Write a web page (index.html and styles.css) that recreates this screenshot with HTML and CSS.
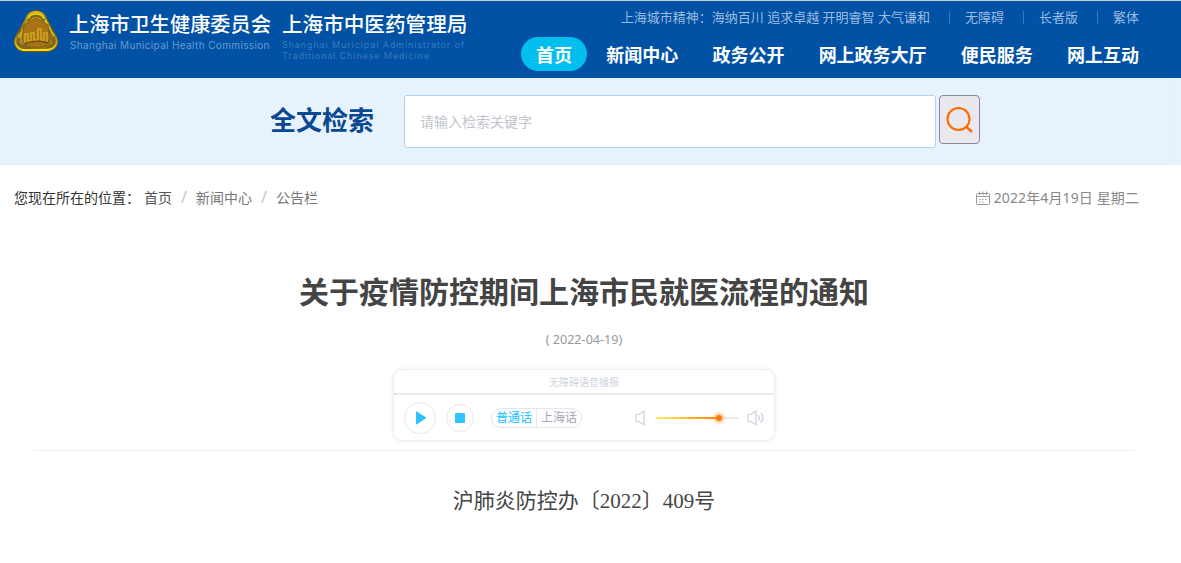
FILE: index.html
```
<!DOCTYPE html>
<html lang="zh-CN">
<head>
<meta charset="utf-8">
<title>关于疫情防控期间上海市民就医流程的通知</title>
<link rel="stylesheet" href="styles.css">
</head>
<body>
<header class="header">
  <div class="brand">
    <svg class="emblem" viewBox="0 0 46 44" width="46" height="44">
      <defs>
        <linearGradient id="gold" x1="0" y1="0" x2="1" y2="1">
          <stop offset="0" stop-color="#a37c18"/><stop offset=".35" stop-color="#c9ab17"/>
          <stop offset=".6" stop-color="#80621a"/><stop offset="1" stop-color="#b3920f"/>
        </linearGradient>
        <linearGradient id="rim" x1="0" y1="0" x2="0" y2="1">
          <stop offset="0" stop-color="#e0c010"/><stop offset=".5" stop-color="#7c5a1c"/><stop offset="1" stop-color="#f0e010"/>
        </linearGradient>
      </defs>
      <path d="M13 8C16-1 30-1 33 8L43 26C49 36 42 43 33 43H12C3 43-2 35 3 26Z" fill="#75521d"/>
      <path d="M14 9C17 1 29 1 32 9L42 27C46 35 41 41 33 41H12C4 41 0 34 4 27Z" fill="url(#gold)" stroke="url(#rim)" stroke-width="2"/>
      <path d="M15 12C18 5 28 5 31 12M6 29C3 35 7 38 14 38M40 29C43 35 39 38 33 38" fill="none" stroke="#80651b" stroke-width="3"/>
      <path d="M15 10C18 3.500 28 3.500 31 10M32 11L41 27" fill="none" stroke="#e6d912" stroke-width="1.300"/>
      <path d="M23 9L35 16L37 30L31 38L15 38L9 30L11 16Z" fill="#a87416" stroke="#81601a" stroke-width="1"/>
      <path d="M12 34V25H15V32H18V24H21V31H25V20H28V31H31V24H34V34" fill="none" stroke="#d0a721" stroke-width="1.6"/>
      <path d="M11 35Q23 30 36 34" fill="none" stroke="#735013" stroke-width="1.5"/>
      <path d="M9 41H36" stroke="#f2e60a" stroke-width="1.5"/>
    </svg>
    <div class="org org-main">
      <div class="org-name">上海市卫生健康委员会</div>
      <div class="org-en">Shanghai Municipal Health Commission</div>
    </div>
    <div class="org org-second">
      <div class="org-name">上海市中医药管理局</div>
      <div class="org-en">Shanghai Muricipal Administrator of<br>Traditional Chinese Medicine</div>
    </div>
  </div>
  <div class="header-right">
    <div class="top-links">
      <span class="motto">上海城市精神：海纳百川 追求卓越 开明睿智 大气谦和</span>
      <a class="top-link">无障碍</a><a class="top-link">长者版</a><a class="top-link">繁体</a>
    </div>
    <nav class="nav">
      <a class="nav-item active">首页</a><a class="nav-item">新闻中心</a><a class="nav-item">政务公开</a><a class="nav-item">网上政务大厅</a><a class="nav-item">便民服务</a><a class="nav-item">网上互动</a>
    </nav>
  </div>
</header>
<section class="search-band">
  <div class="search-inner">
    <h2 class="search-title">全文检索</h2>
    <input class="search-input" type="text" placeholder="请输入检索关键字">
    <button class="search-btn" aria-label="检索">
      <svg width="28" height="28" viewBox="0 0 28 28" fill="none" stroke="#ff6a00" stroke-width="2.1"><circle cx="12.500" cy="13" r="11"/><path d="M20 20.500L26 26" stroke-width="2.4"/></svg>
    </button>
  </div>
</section>
<div class="location-bar">
  <div class="crumbs">
    <span class="crumb-label">您现在所在的位置：</span><a class="crumb home">首页</a><i class="slash">/</i><a class="crumb">新闻中心</a><i class="slash">/</i><a class="crumb">公告栏</a>
  </div>
  <div class="today">
    <svg width="14" height="15" viewBox="0 0 14 15" fill="none" stroke="#999"><path d="M1.5 2.5H12.5Q13.5 2.5 13.5 3.5V12.5Q13.5 13.5 12.5 13.5H1.5Q.5 13.5.5 12.5V3.5Q.5 2.5 1.5 2.5ZM.5 5.5H13.5M3.5 .5V4M10.5 .5V4M7 .5V4"/><path d="M3 8.5H11.5M3 11H8" stroke-dasharray="1.5 1.5"/></svg>
    <span class="today-text">2022年4月19日 星期二</span>
  </div>
</div>
<main class="article">
  <h1 class="title">关于疫情防控期间上海市民就医流程的通知</h1>
  <div class="date">( 2022-04-19)</div>
  <div class="player">
    <div class="player-title">无障碍语音播报</div>
    <div class="progress"></div>
    <div class="controls">
      <div class="round play"><svg width="12" height="14" viewBox="0 0 12 14"><path d="M1 .8Q1 0 2 .6L10.7 6.2Q11.6 7 10.7 7.6L2 13.2Q1 13.8 1 12.8Z" fill="#31c3ff"/></svg></div>
      <div class="round stop"><span class="square"></span></div>
      <div class="lang"><span class="lang-item on">普通话</span><span class="lang-item">上海话</span></div>
      <svg class="mute" width="10" height="16" viewBox="0 0 10 16" fill="none" stroke="#cfcfda" stroke-width="1.2"><path d="M1 4.5H4L9 1V15L4 11.5H1Z"/></svg>
      <div class="volume"><div class="volume-fill"></div><div class="knob"></div></div>
      <svg class="loud" width="17" height="16" viewBox="0 0 17 16" fill="none" stroke="#cfcfda" stroke-width="1.2"><path d="M1 4.5H4L9 1V15L4 11.5H1ZM11.3 5.3Q13.5 8 11.3 10.7M13.7 3Q18 8 13.7 13"/></svg>
    </div>
  </div>
  <div class="doc-no">沪肺炎防控办〔2022〕409号</div>
</main>
</body>
</html>
```
FILE: styles.css
```
* { box-sizing: border-box; }
body {
  margin: 0;
  height: 563px;
  overflow: hidden;
  background: #fff;
  font-family: "Noto Sans", "Noto Sans CJK SC", sans-serif;
  font-size: 14px;
  white-space: nowrap;
}
.header {
  height: 78px;
  border-top: 1px solid #c5cdd2;
  background: #0152a5;
  display: flex;
  justify-content: space-between;
}
.brand { display: flex; padding: 8px 0 0 13px; }
.emblem { display: block; flex: none; }
.org-main { margin-left: 10px; width: 202px; }
.org-second { margin-left: 11px; }
.org-name { color: #fff; font-size: 20.2px; font-weight: 500; line-height: 30px; }
.org-second .org-name { font-size: 20.6px; }
.org-en { font-family: Inter, sans-serif; }
.org-main .org-en { margin-left: 1px; font-size: 10px; line-height: 12px; letter-spacing: .36px; color: #669bd0; }
.org-second .org-en { font-size: 9px; line-height: 11px; letter-spacing: .88px; color: #3979bb; }
.header-right { padding-right: 27px; }
.top-links {
  display: flex;
  justify-content: flex-end;
  align-items: center;
  height: 32px;
  padding-right: 15px;
  font-size: 13px;
  line-height: 18px;
  color: #9abbe0;
}
.top-link { display: flex; align-items: center; }
.top-link::before { content: ""; width: 1px; height: 13px; margin: 0 15px 0 19px; background: #3479bd; }
.nav { display: flex; gap: 4.2px; margin-top: 4px; }
.nav-item {
  height: 34px;
  padding: 0 15px;
  border-radius: 17px;
  color: #fff;
  font-size: 18px;
  font-weight: 700;
  line-height: 36px;
}
.active { background: #00bfee; }
.search-band { height: 87px; background: #e6f3fd; }
.search-inner {
  width: 1169px;
  height: 87px;
  border: solid #e9edf1;
  border-width: 0 1px 1px 0;
  border-radius: 0 0 4px 0;
  display: flex;
  padding: 17px 0 0 270px;
}
.search-title { margin: 0; width: 134px; font-size: 26px; line-height: 50px; color: #0b4891; }
.search-input {
  width: 532px;
  height: 53px;
  padding: 0 15px;
  border: 1px solid #b4d3f1;
  border-radius: 3px;
  background: #fff;
  font: 14px "Noto Sans", "Noto Sans CJK SC", sans-serif;
}
.search-input::placeholder { color: #c0c4cc; }
.search-btn {
  width: 41px;
  height: 49px;
  margin-left: 3px;
  padding: 1px 0 0;
  border: 1px solid #85869a;
  border-radius: 4px;
  background: #e9e9ed;
  display: flex;
  align-items: center;
  justify-content: center;
}
.location-bar {
  display: flex;
  justify-content: space-between;
  height: 66px;
  padding: 0 42px 0 14px;
  line-height: 66px;
  color: #777;
}
.crumb-label { display: inline-block; width: 130px; color: #333; }
.home { color: #555; }
.slash {
  display: inline-block;
  width: 24px;
  text-align: center;
  color: #c0c4cc;
  font-size: 16px;
  line-height: 20px;
  font-style: normal;
}
.today { display: flex; align-items: center; gap: 4px; color: #888; }
.today-text { letter-spacing: .11px; }
.article {
  width: 1100px;
  margin-left: 34px;
  display: flex;
  flex-direction: column;
  align-items: center;
}
.title { margin: 39px 0 0; font-size: 30px; line-height: 44px; color: #444; }
.date { margin-top: 16px; font-size: 12.6px; line-height: 20px; color: #999; }
.player {
  width: 382px;
  height: 72px;
  margin-top: 19px;
  border: 1px solid #eeeef1;
  border-radius: 10px;
  box-shadow: 0 0 4px rgba(0, 0, 0, .08);
}
.player-title { height: 23px; padding-top: 1px; text-align: center; font-size: 10px; line-height: 23px; color: #cfd3e2; }
.progress { height: 2px; background: linear-gradient(90deg, #a5def9, #e8ebf1 4px); }
.controls { display: flex; align-items: center; height: 45px; padding-left: 10px; padding-top: 1px; }
.round { display: flex; align-items: center; justify-content: center; border: 1px solid #e7e7f0; border-radius: 50%; }
.play { width: 32px; height: 32px; padding-left: 2px; }
.stop { width: 28px; height: 28px; margin-left: 10px; }
.square { width: 10px; height: 10px; border-radius: 1px; background: #31c3ff; }
.lang { display: flex; width: 91px; height: 20px; margin-left: 17px; border: 1px solid #e6e6f0; border-radius: 10px; font-size: 12px; line-height: 18px; color: #a2a4b3; }
.lang-item { width: 44px; padding-left: 4px; }
.on { width: 45px; border-right: 1px solid #e6e6f0; color: #12bfff; }
.mute { margin-left: 53px; }
.volume { position: relative; width: 82px; height: 2px; margin-left: 11px; background: #e8eaf1; }
.volume-fill { width: 63px; height: 2px; background: linear-gradient(90deg, #ffef61, #ff8000); }
.knob { position: absolute; left: 60px; top: -2px; width: 6px; height: 6px; border-radius: 50%; background: #ff8000; box-shadow: 0 0 4px 1px #ff9b38; }
.loud { margin-left: 9px; }
.doc-no {
  width: 1100px;
  margin-top: 9px;
  padding-top: 30px;
  border-top: 1px solid #ededed;
  text-align: center;
  font-family: "Liberation Serif", "Noto Sans CJK SC", serif;
  font-size: 21px;
  line-height: 40px;
  color: #444;
}
```
